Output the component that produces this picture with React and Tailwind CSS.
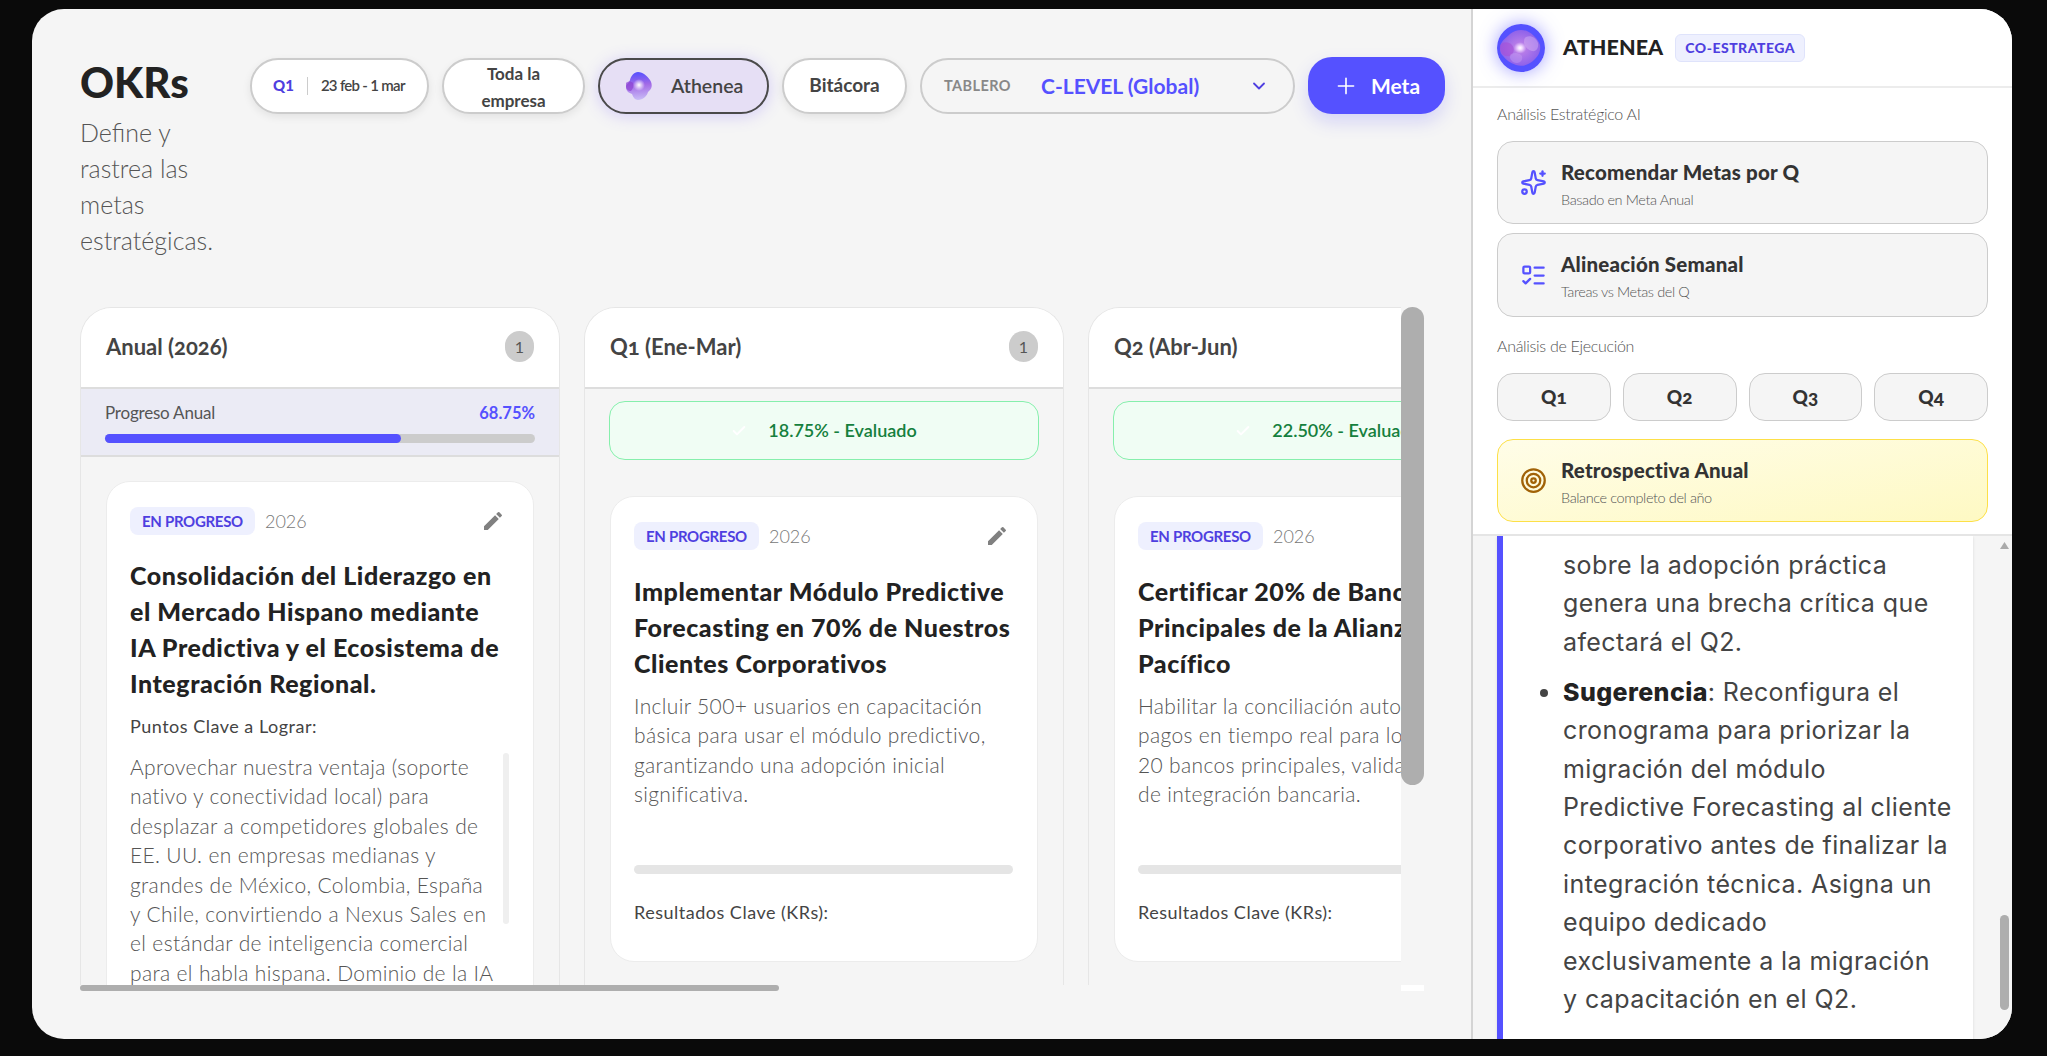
import React from "react";
import { ChevronDown, Check, ListTodo, Plus, Sparkles, Target } from "lucide-react";
import { MdEdit } from "react-icons/md";

const heading = "[font-family:Lato,sans-serif]";
const columns = [
  {
    title: "Q1 (Ene-Mar)",
    count: "1",
    score: "18.75% - Evaluado",
    goal: ["Implementar Módulo Predictive", "Forecasting en 70% de Nuestros", "Clientes Corporativos"],
    desc: ["Incluir 500+ usuarios en capacitación", "básica para usar el módulo predictivo,", "garantizando una adopción inicial", "significativa."],
  },
  {
    title: "Q2 (Abr-Jun)",
    count: "1",
    score: "22.50% - Evaluado",
    goal: ["Certificar 20% de Bancos", "Principales de la Alianza del", "Pacífico"],
    desc: ["Habilitar la conciliación automática de", "pagos en tiempo real para los", "20 bancos principales, validando APIs", "de integración bancaria."],
  },
];

const Lines = ({ items }) =>
  items.map((line) => (
    <span key={line} className="block whitespace-nowrap">
      {line}
    </span>
  ));

const OrbLarge = () => (
  <svg width="48" height="48" viewBox="0 0 48 48" className="shrink-0">
    <defs>
      <radialGradient id="orbCore" cx="50%" cy="50%" r="50%">
        <stop offset="0%" stopColor="#ffffff" />
        <stop offset="10%" stopColor="#f3dcff" />
        <stop offset="32%" stopColor="#b57be8" />
        <stop offset="100%" stopColor="#8f62ea" />
      </radialGradient>
    </defs>
    <circle cx="24" cy="24" r="24" fill="#5551ff" />
    <path d="M3 25c0-8 6-11 10-15 5-4 11-5 17-3 6 3 11 8 13 14 1 7-2 12-7 16-5 4-11 6-17 4-6-2-10-5-13-9-2-2-3-4-3-7z" fill="url(#orbCore)" />
    <path d="M3 21c4-4 9-3 12 0 3 4 2 9-2 11-4 1-8-1-9-4-1-2-1-5-1-7z" fill="#a64fd6" opacity=".6" />
    <path d="M29 13c5-2 10 1 12 6 1 5-2 9-6 8-4-1-7-4-8-8 0-3 0-5 2-6z" fill="#d7b6f5" opacity=".45" />
    <path d="M14 30c4-2 9-1 11 2 1 3-1 7-5 7-3 0-6-2-7-5 0-2 0-3 1-4z" fill="#c9a2f2" opacity=".4" />
  </svg>
);

const OrbSmall = () => (
  <svg width="30" height="30" viewBox="0 0 30 30" className="shrink-0">
    <defs>
      <linearGradient id="orbBlob" x1="45%" y1="0%" x2="50%" y2="100%">
        <stop offset="0%" stopColor="#5551ff" />
        <stop offset="45%" stopColor="#a36ae6" />
        <stop offset="100%" stopColor="#c9bdf6" />
      </linearGradient>
      <radialGradient id="orbSpot" cx="50%" cy="50%" r="50%">
        <stop offset="0%" stopColor="#ffffff" />
        <stop offset="100%" stopColor="#ffffff" stopOpacity="0" />
      </radialGradient>
    </defs>
    <path d="M14 1c5 0 9 4 12 8 3 5 2 9-2 12-1 4-5 8-10 8-3 0-5-3-6-6-3-1-6-3-6-7 0-3 3-4 4-7 1-4 4-8 8-8z" fill="url(#orbBlob)" />
    <path d="M2 12c2-2 5-2 7 0 1 3 0 6-2 8-3 0-5-2-5-5z" fill="#8b3fd1" opacity=".65" />
    <circle cx="15" cy="14" r="6" fill="url(#orbSpot)" />
  </svg>
);

const Pill = ({ children, className = "" }) => (
  <button className={`h-14 shrink-0 rounded-full border-2 border-[#ccc] bg-white text-[17px] font-bold text-[#444] shadow-[0_3px_8px_rgba(0,0,0,0.08)] ${className}`}>
    {children}
  </button>
);

const PanelButton = ({ icon, title, sub, className = "" }) => (
  <button className={`flex w-full items-center gap-[14px] rounded-2xl border px-[22px] text-left ${className}`}>
    {icon}
    <div>
      <div className={`${heading} text-[20.5px] leading-7 font-black tracking-[0.2px] text-[#333]`}>{title}</div>
      <div className="mt-[6px] text-[14.5px] leading-4 font-light tracking-[-0.4px] text-[#555]">{sub}</div>
    </div>
  </button>
);

const StatusRow = () => (
  <div className="flex items-center">
    <span className="flex h-7 items-center rounded-lg bg-[#eef0fe] px-3 text-[15px] font-bold tracking-[-0.3px] text-[#4f3fe0]">EN PROGRESO</span>
    <span className="ml-[10px] text-[18px] font-light text-[#777]">2026</span>
    <MdEdit className="mr-1 ml-auto text-[#808080]" size={24} />
  </div>
);

const ColumnHeader = ({ title, count }) => (
  <div className="flex h-[81px] shrink-0 items-center justify-between border-b-2 border-[#ddd] bg-white px-[25px] pb-[2px]">
    <span className={`${heading} text-[22px] font-bold text-[#444] oldstyle-nums`}>{title}</span>
    <span className="flex h-[31px] w-[29px] items-center justify-center rounded-full bg-[#ccc] text-[16px] text-[#555]">{count}</span>
  </div>
);

const Column = ({ title, count, children }) => (
  <section className="flex h-full w-[480px] shrink-0 flex-col overflow-hidden rounded-t-[32px] border-x border-t border-[#e6e6e6] bg-[#f5f5f5]">
    <ColumnHeader title={title} count={count} />
    {children}
  </section>
);

export default function App() {
  return (
    <main className="h-screen overflow-hidden bg-[#0a0a0a] pt-[9px] pr-[35px] pb-[17px] pl-8 [font-family:Lato,sans-serif]">
      <div className="flex h-full overflow-hidden rounded-[32px] bg-[#f5f5f5]">
        <div className="flex w-[1441px] shrink-0 flex-col border-r-2 border-[#d4d4d4] pt-12 pl-12">
          <header className="flex h-[250px] shrink-0 items-start">
            <div className="w-[170px] shrink-0">
              <h1 className={`${heading} text-[42px] leading-[50px] font-black text-[#222]`}>OKRs</h1>
              <p className="mt-[7px] w-[140px] text-[25px] leading-9 font-light text-[#555]">Define y rastrea las metas estratégicas.</p>
            </div>
            <div className="flex items-center gap-[13px]">
              <Pill className="flex w-[179px] items-center pl-[21px]">
                <span className="text-[15px] font-black text-[#4f3fe0]">Q1</span>
                <span className="mx-[13px] h-[18px] w-px bg-[#ccc]"></span>
                <span className="text-[15px] font-semibold tracking-[-0.7px]">23 feb - 1 mar</span>
              </Pill>
              <Pill className="w-[143px] leading-[27px]">
                Toda la
                <br />
                empresa
              </Pill>
              <button className="flex h-14 w-[171px] shrink-0 items-center gap-[17px] rounded-full border-2 border-[#4a4a4a] bg-[#e6dff5] pl-[24px] text-[19.5px] font-semibold text-[#444] shadow-[0_2px_16px_rgba(110,80,255,0.25)]">
                <OrbSmall />
                Athenea
              </button>
              <Pill className="w-[125px] text-[19px]">Bitácora</Pill>
              <div className="flex h-14 w-[375px] shrink-0 items-center rounded-full border-2 border-[#ccc] pl-[22px]">
                <span className="w-[97px] text-[14.5px] font-bold tracking-[0.4px] text-[#888]">TABLERO</span>
                <span className={`${heading} text-[21px] font-bold text-[#5551ff]`}>C-LEVEL (Global)</span>
                <ChevronDown className="mr-[24px] ml-auto text-[#4f3fe0]" size={20} strokeWidth={2.2} />
              </div>
              <button className="flex h-[57px] w-[137px] shrink-0 items-center justify-center gap-3 rounded-3xl bg-[#5551ff] text-[21px] font-bold text-white shadow-[0_8px_18px_rgba(85,81,255,0.2)]">
                <Plus size={26} strokeWidth={1.5} />
                Meta
              </button>
            </div>
          </header>

          <div className="w-[1344px]">
            <div className="flex h-[678px]">
              <div className="flex w-[1321px] gap-6 overflow-hidden">
                <Column title="Anual (2026)" count="1">
                  <div className="shrink-0 border-b-2 border-[#ddd] bg-[#ebebf5] px-[24px] pt-[12px] pb-3">
                    <div className="flex items-center justify-between text-[17px] leading-6">
                      <span className="font-normal tracking-[-0.2px] text-[#555]">Progreso Anual</span>
                      <span className="text-[16.5px] font-bold text-[#5551ff]">68.75%</span>
                    </div>
                    <div className="mt-[9px] h-[9px] rounded-full bg-[#ccc]">
                      <div className="h-full w-[68.75%] rounded-full bg-[#5551ff]"></div>
                    </div>
                  </div>
                  <div className="mx-[25px] mt-[24px] h-[600px] shrink-0 rounded-3xl border border-[#ececec] bg-white pt-[25px] pr-6 pl-[23px]">
                    <StatusRow />
                    <h2 className={`${heading} mt-[22px] text-[25px] leading-9 font-black tracking-[0.55px] text-[#222]`}>
                      <Lines items={["Consolidación del Liderazgo en", "el Mercado Hispano mediante", "IA Predictiva y el Ecosistema de", "Integración Regional."]} />
                    </h2>
                    <h3 className={`${heading} mt-[13px] text-[18px] leading-6 font-normal tracking-[0.5px] text-[#444]`}>Puntos Clave a Lograr:</h3>
                    <div className="mt-[14px] flex">
                      <p className="text-[21px] leading-[29.4px] font-light tracking-[0.35px] text-[#555]">
                        <Lines items={["Aprovechar nuestra ventaja (soporte", "nativo y conectividad local) para", "desplazar a competidores globales de", "EE. UU. en empresas medianas y", "grandes de México, Colombia, España", "y Chile, convirtiendo a Nexus Sales en", "el estándar de inteligencia comercial", "para el habla hispana. Dominio de la IA"]} />
                      </p>
                      <div className="mt-[1px] ml-auto h-[171px] w-[6px] shrink-0 rounded-full bg-[#efefef]"></div>
                    </div>
                  </div>
                </Column>

                {columns.map((col) => (
                  <Column key={col.title} title={col.title} count={col.count}>
                    <div className="mx-6 mt-3 flex h-[59px] shrink-0 items-center justify-center gap-[21px] rounded-2xl border border-[#86efac] bg-[#f0fdf4] text-[18px] font-semibold text-[#15803d]">
                      <Check className="text-white" size={16} strokeWidth={3} />
                      {col.score}
                    </div>
                    <div className="mx-[25px] mt-[36px] h-[466px] w-[428px] shrink-0 rounded-3xl border border-[#ececec] bg-white pt-[25px] pr-6 pl-[23px]">
                      <StatusRow />
                      <h2 className={`${heading} mt-[23px] text-[25px] leading-9 font-black tracking-[0.55px] text-[#222]`}>
                        <Lines items={col.goal} />
                      </h2>
                      <p className="mt-[10px] text-[21px] leading-[29.4px] font-light tracking-[0.35px] text-[#555]">
                        <Lines items={col.desc} />
                      </p>
                      <div className="mt-[56px] h-[9px] rounded-full bg-[#e5e5e5]"></div>
                      <h3 className={`${heading} mt-[26px] text-[18px] leading-6 font-normal tracking-[0.5px] text-[#444]`}>Resultados Clave (KRs):</h3>
                    </div>
                  </Column>
                ))}
              </div>
              <div className="h-[478px] w-[23px] shrink-0 rounded-full bg-[#aeaeae]"></div>
            </div>
            <div className="flex h-[6px] justify-between">
              <div className="w-[699px] rounded-full bg-[#aeaeae]"></div>
              <div className="w-[23px] bg-white"></div>
            </div>
          </div>
        </div>

        <aside className="flex min-w-0 flex-1 flex-col">
          <div className="flex h-[527px] shrink-0 flex-col border-b-2 border-[#e5e5e5] bg-white">
            <div className="flex h-[79px] shrink-0 items-center gap-3 border-b-2 border-[#ececec] pl-[24px]">
              <div className="mr-[6px] rounded-full shadow-[0_0_18px_rgba(85,81,255,0.55)]">
                <OrbLarge />
              </div>
              <span className={`${heading} text-[21.5px] font-black tracking-[0.1px] text-[#222]`}>ATHENEA</span>
              <span className="flex h-[28px] items-center rounded-md border border-[#dfe3fb] bg-[#eef0fe] px-[9px] text-[14px] font-black tracking-[0.5px] text-[#4f3fe0]">CO-ESTRATEGA</span>
            </div>
            <div className="px-[24px] pt-[16px]">
              <div className="text-[16px] leading-5 font-light tracking-[-0.3px] text-[#555]">Análisis Estratégico AI</div>
              <PanelButton
                className="mt-[17px] h-[83px] border-[#ccc] bg-[#f5f5f5]"
                icon={<Sparkles className="shrink-0 text-[#5551ff]" size={27} strokeWidth={2} />}
                title="Recomendar Metas por Q"
                sub="Basado en Meta Anual"
              />
              <PanelButton
                className="mt-[9px] h-[84px] border-[#ccc] bg-[#f5f5f5]"
                icon={<ListTodo className="shrink-0 text-[#5551ff]" size={27} strokeWidth={2} />}
                title="Alineación Semanal"
                sub="Tareas vs Metas del Q"
              />
              <div className="mt-[19px] text-[16px] leading-5 font-light tracking-[-0.3px] text-[#555]">Análisis de Ejecución</div>
              <div className="mt-[17px] grid grid-cols-4 gap-3">
                {["Q1", "Q2", "Q3", "Q4"].map((q) => (
                  <button key={q} className={`${heading} h-[48px] rounded-2xl border border-[#ccc] bg-[#f5f5f5] text-[19px] font-black text-[#333] oldstyle-nums`}>
                    {q}
                  </button>
                ))}
              </div>
              <PanelButton
                className="mt-[18px] h-[83px] border-[#fde047] bg-linear-to-br from-[#fffde8] to-[#fef9c3]"
                icon={<Target className="shrink-0 text-[#a16207]" size={27} strokeWidth={2} />}
                title="Retrospectiva Anual"
                sub="Balance completo del año"
              />
            </div>
          </div>

          <div className="flex min-h-0 flex-1 overflow-hidden bg-[#f5f5f5] pl-[24px]">
            <div className="h-[600px] w-[476px] shrink-0 border-l-[6px] border-[#5551ff] bg-white pt-[10px] text-[25px] leading-[38.4px] font-normal tracking-[0.4px] text-[#444] shadow-sm [font-family:Inter,sans-serif]">
              <ul className="list-disc pl-[60px]">
                <li className="list-none whitespace-nowrap">
                  sobre la adopción práctica
                  <br />
                  genera una brecha crítica que
                  <br />
                  afectará el Q2.
                </li>
                <li className="mt-[11.6px] whitespace-nowrap">
                  <strong className="font-extrabold text-[#222]">Sugerencia</strong>: Reconfigura el
                  <br />
                  cronograma para priorizar la
                  <br />
                  migración del módulo
                  <br />
                  Predictive Forecasting al cliente
                  <br />
                  corporativo antes de finalizar la
                  <br />
                  integración técnica. Asigna un
                  <br />
                  equipo dedicado
                  <br />
                  exclusivamente a la migración
                  <br />y capacitación en el Q2.
                </li>
              </ul>
            </div>
            <div className="ml-[27px] flex w-[9px] shrink-0 flex-col">
              <svg width="9" height="7" viewBox="0 0 9 7" className="mt-[6px]">
                <path d="M4.5 0 9 7H0z" fill="#aaa" />
              </svg>
              <div className="mt-[366px] h-[95px] rounded-full bg-[#aeaeae]"></div>
            </div>
          </div>
        </aside>
      </div>
    </main>
  );
}
